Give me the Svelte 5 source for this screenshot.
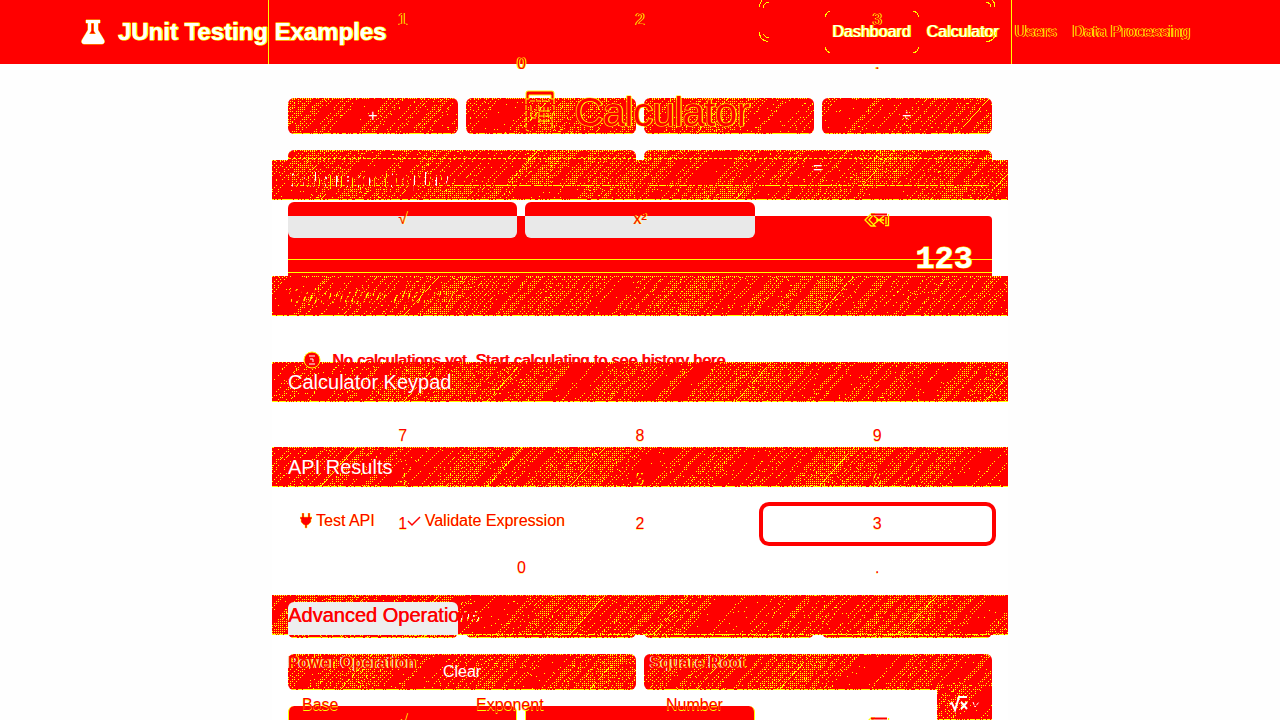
<script>
  const hash = (n) => {
    const v = Math.sin(n) * 43758.5453;
    return v - Math.floor(v);
  };

  function grain(w, h, seed) {
    const phase = seed > 8 ? 0 : 1;
    let d = '';
    for (let y = 0; y < h; y++) {
      for (let x = 0; x < w; x++) {
        const s = Math.floor(x + y * 0.9);
        const band = Math.sin(s / 19 + seed) * 0.6 + Math.sin(s / 47 + seed * 2.3) * 0.6;
        const noise = hash(x * 12.9898 + y * 78.233 + seed);
        const lane = hash(Math.floor(s / 2) * 3.17 + seed);
        const lattice = x % 2 === 0 && y % 2 === phase;
        const dot = lattice && lane < 0.42 + band * 0.3 && noise < 0.8;
        const speck = noise < 0.01 + Math.max(0, band) * 0.012;
        const stripe = s % 83 < 1 && band > 0.1 && noise < 0.8;
        const edge = (y === h - 1 && noise < 0.75) || (y === 0 && x % 2 === 0 && noise < 0.7);
        if (dot || speck || stripe || edge) d += `M${x} ${y}h1v1h-1z`;
      }
    }
    return d;
  }
  const ops = [['+', 1], ['', 2], ['', 3], ['÷', 4]];
  const rows = [['7', '8', '9'], ['4', '5', '6'], ['1', '2', '3']];
</script>

{#snippet texture(w, h, seed)}
  <svg class="texture" width={w} height={h} viewBox="0 0 {w} {h}" shape-rendering="crispEdges"><path d={grain(w, h, seed)} fill="#ff0" /></svg>
{/snippet}

{#snippet backspace()}
  <svg width="26" height="14" viewBox="0 0 26 14" fill="none" stroke="#ff0" stroke-width="1.3"><path d="M7 1 1 7l6 6h4L5 7l5-6z" /><path d="M7 1.5h16" stroke="red" stroke-width="2" /><path d="m10 3 5 4-5 4M20 3l-5 4 5 4M12 7h8M22 4v7M21 12.500h3.500V1" /></svg>
{/snippet}

{#snippet card(title, kind, seed)}
  <header class="card-head {kind}">
    {@render texture(736, 40, seed)}
    {#if kind === 'advanced'}<i class="pale"></i><h2>Advanced Operatio<span>ns</span></h2>{:else}<h2>{title}</h2>{/if}
  </header>
{/snippet}

<main>
  <section class="layer first">
    <nav>
      <div class="brand">
        <svg width="24" height="26" viewBox="0 0 24 26"><path fill="#fff" stroke="#ff0" stroke-width=".8" fill-rule="evenodd" d="M5 1h14v3h-2v7l6 10c1 2 0 4-2 4H3c-2 0-3-2-2-4l6-10V4H5zM10 4v8l-2 3h7l-2-3V4z" /></svg>
        <b>JUnit Testing Examples</b>
      </div>
      <div class="links"><span class="active">Dashboard</span><span class="bold">Calculator</span><span class="ghost">Users</span><span class="ghost">Data Processing</span></div>
      <svg class="traces" width="1280" height="64" viewBox="0 0 1280 64" fill="none" stroke="#ff0" shape-rendering="crispEdges">
        <path d="M268.500 0v64M1011.500 0v64" />
        <path d="M759.500 7q0-6 5-9M763.500 8q0-5 5-6M759.500 32q0 9 9 9.500M763.500 34q1 3 5 4M986 2q5 1 5 5M990-2q5 3 5 9M986 37q5-1 6-5M986 41.500q9 0 9.500-9" />
        <path d="M825.500 17q0-5 5-5.500M913 11.500q5 0 5.500 5.500M825.500 47q0 5 5 5.500M913 52.500q5 0 5.500-5.500" />
      </svg>
    </nav>
    <div class="title">
      <svg width="30" height="42" viewBox="0 0 30 42"><path d="M1 8V3q0-2 2-2h24q2 0 2 2v6h-3V5H4v4H1z" fill="red" stroke="#ff0" /><path d="M1 9v30q0 2 3 2M29 9v13l-2 3v14M5 11h20M6 16v12h5v-9M14 16v20M19 17v17M23 17v10M14 21h12M14 26h12M14 31h12" fill="none" stroke="#ff0" stroke-dasharray="5 1" /></svg>
      <h1>Calculator</h1>
    </div>
    <div class="column">
      {@render card('Calculator Display', 'broken', 2)}
      <div class="display"><b>123</b></div>
      {@render card('Calculator Keypad', 'clear-text', 7)}
      <div class="pad">
        {#each rows as row, r}
          {#each row as n}<div class="key" class:faded={r === 1} class:focus={n === '3'}>{n}</div>{/each}
        {/each}
        <div class="key double">0</div><div class="key">.</div>
      </div>
      <div class="four">{#each ops as o}<div class="op">{@render texture(170, 36, o[1] + 4)}</div>{/each}</div>
      <div class="two"><div class="op">{@render texture(348, 36, 3)}<span>Clear</span></div><div class="op">{@render texture(348, 36, 5)}</div></div>
      <div class="three"><div class="solid"><span>√</span></div><div class="solid"></div><div class="key back">{@render backspace()}</div></div>
    </div>
  </section>

  <section class="layer second">
    <div class="column">
      <div class="pad top"><div class="key">1</div><div class="key">2</div><div class="key">3</div><div class="key double">0</div><div class="key">.</div></div>
      <div class="four">{#each ops as o}<div class="op">{@render texture(170, 36, o[1])}<span class="sign">{o[0]}</span></div>{/each}</div>
      <div class="two upper"><div class="op">{@render texture(348, 36, 6)}</div><div class="op">{@render texture(348, 36, 1)}<span>=</span></div></div>
      <div class="three upper"><div class="split"><span>√</span></div><div class="split"><span>x²</span></div><div class="back">{@render backspace()}</div></div>
      {@render card('Calculation History', 'trace', 4)}
      <div class="notice">
        <svg width="18" height="18" viewBox="0 0 18 18"><circle cx="9" cy="9" r="8" fill="red" stroke="#ff0" /><path d="M6 5h6M7 8h3v3M6 13h6" fill="none" stroke="#fff" /></svg>
        <span>No calculations yet. Start calculating to see history here.</span>
      </div>
      {@render card('API Results', 'clear-text', 9)}
      <div class="actions">
        <span><svg width="12" height="16" viewBox="0 0 12 16"><path fill="red" stroke="#ff0" stroke-width=".5" d="M2 0h2v4h4V0h2v4h2v2h-1v3l-3 3H7v3H5v-3H4L1 9V6H0V4h2z" /></svg>Test API</span>
        <span><svg width="14" height="12" viewBox="0 0 14 12"><path fill="none" stroke="red" stroke-width="1.500" d="m1 6 4 4 8-8" /></svg>Validate Expression</span>
      </div>
      {@render card('Advanced Operations', 'advanced', 11)}
      <div class="forms">
        <div><h3>Power Operation</h3><div class="labels"><span>Base</span><span>Exponent</span></div></div>
        <div><h3>Square Root</h3><div class="labels"><span>Number</span></div></div>
        <div class="root">{@render texture(55, 35, 12)}<svg width="32" height="18" viewBox="0 0 32 18" fill="none" stroke="#fff" stroke-width="2"><path d="m1 9 2-1 3 7L10 2h8M12 7l6 7M18 7l-6 7" /><path d="m24 7 2 5 4-5" stroke-width="1" stroke-dasharray="3 1" /></svg></div>
      </div>
    </div>
  </section>
</main>

<style>
  :global(body) { margin: 0; overflow: hidden; background: #fefefe; }
  * { box-sizing: border-box; }
  main { position: relative; width: 1280px; height: 720px; overflow: hidden; font: 16px/24px "Liberation Sans", Arial, sans-serif; color: red; }
  .layer { position: absolute; inset: 0; }
  .column { width: 736px; margin: 0 auto; }
  .first .column { background: #fff; height: 560px; }
  nav { position: relative; height: 64px; background: red; padding: 0 82px 0 81px; display: flex; align-items: center; justify-content: space-between; color: #fff; }
  .brand { display: flex; gap: 13px; align-items: center; font-size: 24px; -webkit-text-stroke: 1px #ff0; paint-order: stroke; text-shadow: 1px 0 #ff0; }
  .brand b { line-height: 36px; letter-spacing: -.03px; }
  .links { display: flex; gap: 16px; margin-right: 8px; }
  .active, .bold { text-shadow: 1px 0 #ff0, -1px 0 #ff0; }
  .ghost { color: red; text-shadow: 1px 0 #ff0, -1px 0 #ff0; }
  .traces { position: absolute; inset: 0; z-index: 3; }
  .title { position: relative; z-index: 4; height: 96px; padding-top: 26px; display: flex; justify-content: center; gap: 19px; }
  h1 { margin: -2px 0 0; font-weight: 400; font-size: 40px; line-height: 48px; color: red; letter-spacing: -.5px; padding-right: 5px; -webkit-text-stroke: 1.200px #ff0; paint-order: stroke; text-shadow: 1px 0 #ff0; }
  .card-head { position: relative; height: 40px; padding: 8px 16px; background: red; overflow: hidden; }
  h2 { position: relative; z-index: 2; width: fit-content; margin: 0; font-size: 20px; line-height: 24px; font-weight: 400; color: #fff; }
  .clear-text h2 { text-shadow: -1px 0 red, 1px 0 red; }
  .texture { position: absolute; left: 0; top: 0; display: block; }
  .broken { overflow: visible; }
  .broken h2 { color: transparent; background: repeating-linear-gradient(95deg, red 0 5px, #fff 5px 6.500px, red 6.500px 10px, #ff0 10px 11px); background-clip: text; }
  .trace h2 { color: transparent; background: repeating-linear-gradient(115deg, red 0 4px, #ff0 4px 5.500px); background-clip: text; }
  .display { height: 60px; margin: 16px 16px 86px; padding: 25px 19px 0; background: linear-gradient(#ff0, #ff0) 0 43px / 100% 1px no-repeat, linear-gradient(#ff0, #ff0) 0 56px / 100% 1px no-repeat, red; border-radius: 0 4px 0 0; color: #fff; text-align: right; font: 32px/38px "Liberation Mono", monospace; -webkit-text-stroke: 1px #ff0; paint-order: stroke; }
  .pad { display: grid; grid-template-columns: repeat(3, 1fr); gap: 8px; padding: 16px; }
  .key { height: 36px; border-radius: 6px; display: flex; align-items: center; justify-content: center; text-shadow: 0 1px #ff08; }
  .double { grid-column: span 2; }
  .focus { box-shadow: 0 0 0 4px red; }
  .faded { position: relative; z-index: 3; color: transparent; background: repeating-linear-gradient(115deg, transparent 0 2px, #ff0 2px 4px); background-clip: text; text-shadow: none; }
  .four { display: grid; grid-template-columns: repeat(4, 1fr); gap: 8px; padding: 0 16px; }
  .two, .three { display: grid; grid-template-columns: 1fr 1fr; gap: 8px; padding: 16px 16px 0; }
  .three { grid-template-columns: repeat(3, 1fr); }
  .op { position: relative; height: 36px; border-radius: 6px; overflow: hidden; background: red; display: flex; align-items: center; justify-content: center; color: #fff; }
  .op span { position: relative; }
  .sign { font-weight: 100; }
  .solid { height: 36px; background: red; border: 1px solid #ff0; border-width: 0 1px; border-radius: 6px; text-align: center; color: red; line-height: 30px; text-shadow: 1px 0 #ff0; }
  .back { display: flex; height: 36px; align-items: center; justify-content: center; }
  .top { height: 98px; padding-top: 2px; position: relative; z-index: 2; }
  .top .key { text-shadow: 1px 0 #ff0, -1px 0 #ff0; }
  .upper .op::after { content: ""; position: absolute; left: 0; right: 0; top: 8px; border-top: 1px dashed #ff0; }
  .split { height: 36px; border-radius: 6px; background: linear-gradient(red 14px, #e9e9e9 14px); text-align: center; line-height: 34px; }
  .split span { text-shadow: 1px 0 #ff0; }
  .second > .column > .trace { margin-top: 38px; }
  .notice { height: 131px; padding: 36px 31px; display: flex; gap: 11px; line-height: 18px; text-shadow: 1px 0 red; }
  .notice svg { margin-top: -1px; }
  .actions { height: 108px; padding: 22px 28px; display: flex; gap: 32px; }
  .actions span { display: flex; gap: 4px; height: 24px; align-items: center; text-shadow: .4px 0 #ff0; }
  .pale { position: absolute; left: 16px; top: 7px; width: 170px; height: 33px; background: #eee; border-radius: 6px 6px 0 0; }
  .advanced h2 { color: red; text-shadow: .5px 0 red; }
  .advanced h2 span { background: repeating-linear-gradient(115deg, red 0 3px, #fff 3px 4px, #ff0 4px 5px); color: transparent; background-clip: text; text-shadow: none; }
  .forms { position: relative; display: grid; grid-template-columns: minmax(0, 1fr) minmax(0, 1fr); padding: 16px; gap: 8px; }
  h3 { margin: 0 0 18px; font-size: 16px; line-height: 24px; font-weight: 700; color: red; text-shadow: 1px 0 #ff0, -1px 0 #eee; }
  .forms > div:nth-child(2) h3 { padding-left: 6px; }
  .labels { display: flex; padding-left: 14px; }
  .labels span { width: 174px; flex: none; text-shadow: 0 1px #ff0; }
  .forms > div:nth-child(2) .labels { padding-left: 22px; }
  .forms .root { position: absolute; right: 16px; top: 50px; width: 55px; height: 35px; background: red; }
  .root svg:last-child { position: relative; margin: 10px 0 0 12px; }
</style>
